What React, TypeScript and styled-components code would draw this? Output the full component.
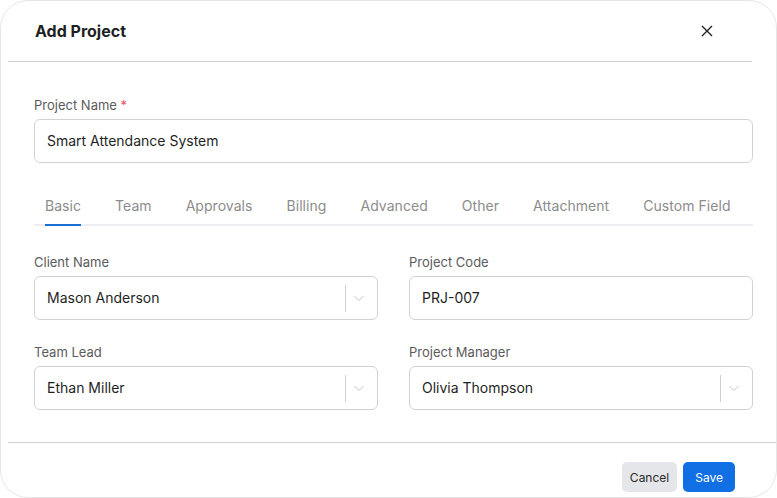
import React from "react";
import styled, { createGlobalStyle } from "styled-components";

const GlobalStyle = createGlobalStyle`
  html, body {
    margin: 0;
    padding: 0;
    background: #ffffff;
  }
  * {
    box-sizing: border-box;
  }
  body {
    font-family: Inter, "Open Sans", sans-serif;
  }
`;

const Modal = styled.div`
  width: 777px;
  height: 498px;
  background: #fff;
  border: 1px solid #e6e6e6;
  border-radius: 28px;
  overflow: hidden;
  display: flex;
  flex-direction: column;
`;

const Header = styled.div`
  height: 61px;
  margin: 0 24px 0 7px;
  padding: 0 37px 0 27px;
  display: flex;
  align-items: center;
  justify-content: space-between;
  border-bottom: 1px solid #cfcfcf;
`;

const Title = styled.h2`
  margin: 0;
  font-size: 16px;
  font-weight: 700;
  color: #1d1f23;
`;

const CloseButton = styled.button`
  width: 16px;
  height: 16px;
  padding: 0;
  border: none;
  background: none;
  display: flex;
  align-items: center;
  justify-content: center;
  color: #222;
  cursor: pointer;
`;

const Body = styled.div`
  flex: 1;
  padding: 33px 23px 0 33px;
`;

const Label = styled.label`
  display: block;
  font-size: 13px;
  line-height: 18px;
  padding-top: 1px;
  color: #5b5b5b;
  margin-bottom: 5px;
`;

const Required = styled.span`
  color: #e0566b;
`;

const Field = styled.div`
  display: flex;
  align-items: center;
  height: 44px;
  border: 1px solid #d2d2d2;
  border-radius: 6px;
  background: #fff;
`;

const Value = styled.div`
  flex: 1;
  padding: 0 12px 1px;
  font-size: 14px;
  line-height: 20px;
  color: #1f1f1f;
`;

const Separator = styled.span`
  width: 1px;
  height: 27px;
  background: #d0d0d0;
`;

const Indicator = styled.span`
  display: flex;
  align-items: center;
  padding: 0 12px 0 7px;
  color: #c4c4c4;
`;

const Tabs = styled.div`
  display: flex;
  gap: 34px;
  margin-top: 24px;
  padding-left: 11px;
  border-bottom: 2px solid #eceef0;
`;

const Tab = styled.div<{ $active?: boolean }>`
  padding: 9px 0 8px;
  margin-bottom: -2px;
  font-size: 14px;
  line-height: 20px;
  letter-spacing: 0.05px;
  color: #8c8c8c;
  border-bottom: 2px solid ${(p) => (p.$active ? "#1b6fd2" : "transparent")};
  white-space: nowrap;
`;

const Grid = styled.div`
  display: grid;
  grid-template-columns: 1fr 1fr;
  column-gap: 31px;
  row-gap: 22px;
  margin-top: 26px;
`;

const Footer = styled.div`
  margin-left: 7px;
  height: 55px;
  border-top: 1px solid #d2d2d2;
  display: flex;
  justify-content: flex-end;
  align-items: flex-start;
  gap: 6px;
  padding: 19px 41px 0 0;
`;

const Button = styled.button<{ $primary?: boolean }>`
  height: 30px;
  padding: 0 ${(p) => (p.$primary ? "12px" : "8px")};
  border: none;
  border-radius: 5px;
  font-family: inherit;
  font-size: 12px;
  background: ${(p) => (p.$primary ? "#0f6fe3" : "#e4e6e9")};
  color: ${(p) => (p.$primary ? "#fff" : "#2a2a2a")};
  cursor: pointer;
`;

const Chevron = () => (
  <svg width="12" height="12" viewBox="0 0 12 12" fill="none">
    <path d="M1.5 4l4.5 4.5L10.5 4" stroke="currentColor" strokeWidth="1" />
  </svg>
);

const tabs = ["Basic", "Team", "Approvals", "Billing", "Advanced", "Other", "Attachment", "Custom Field"];

function SelectField({ label, value }: { label: string; value: string }) {
  return (
    <div>
      <Label>{label}</Label>
      <Field>
        <Value>{value}</Value>
        <Separator />
        <Indicator>
          <Chevron />
        </Indicator>
      </Field>
    </div>
  );
}

function TextField({ label, value }: { label: string; value: string }) {
  return (
    <div>
      <Label>{label}</Label>
      <Field>
        <Value>{value}</Value>
      </Field>
    </div>
  );
}

export default function App() {
  return (
    <>
      <GlobalStyle />
      <Modal>
        <Header>
          <Title>Add Project</Title>
          <CloseButton aria-label="Close">
            <svg width="12" height="12" viewBox="0 0 12 12">
              <path d="M1 1l10 10M11 1L1 11" stroke="currentColor" strokeWidth="1.4" />
            </svg>
          </CloseButton>
        </Header>
        <Body>
          <Label>
            Project Name <Required>*</Required>
          </Label>
          <Field>
            <Value>Smart Attendance System</Value>
          </Field>
          <Tabs>
            {tabs.map((t, i) => (
              <Tab key={t} $active={i === 0}>
                {t}
              </Tab>
            ))}
          </Tabs>
          <Grid>
            <SelectField label="Client Name" value="Mason Anderson" />
            <TextField label="Project Code" value="PRJ-007" />
            <SelectField label="Team Lead" value="Ethan Miller" />
            <SelectField label="Project Manager" value="Olivia Thompson" />
          </Grid>
        </Body>
        <Footer>
          <Button>Cancel</Button>
          <Button $primary>Save</Button>
        </Footer>
      </Modal>
    </>
  );
}
